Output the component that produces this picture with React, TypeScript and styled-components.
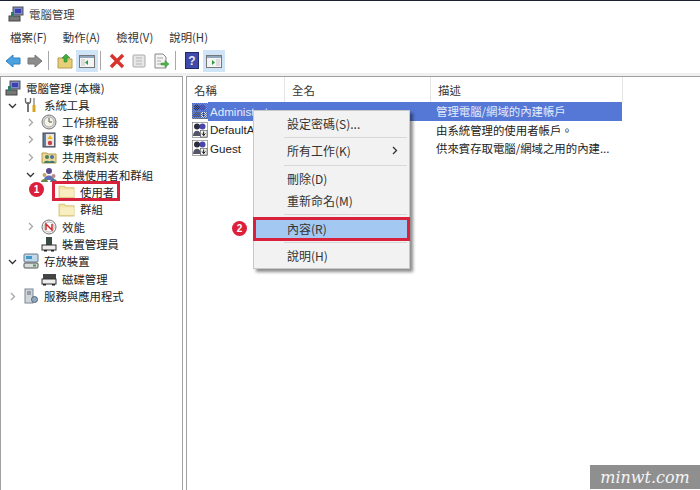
import styled, { createGlobalStyle } from 'styled-components';
import type { ReactNode } from 'react';

const Global = createGlobalStyle`
  html, body {
    margin: 0;
    padding: 0;
    background: #fff;
  }
`;

const Win = styled.div`
  position: relative;
  width: 700px;
  height: 490px;
  overflow: hidden;
  display: flex;
  flex-direction: column;
  background: #fff;
  font-family: 'Noto Sans CJK TC', 'Liberation Sans', sans-serif;
  font-size: 11.4px;
  color: #222;
`;

const TitleBar = styled.div`
  display: flex;
  align-items: center;
  gap: 5px;
  height: 26px;
  box-sizing: border-box;
  padding: 0 8px;
  border-top: 1px solid #1c2030;
  color: #444;
`;

const MenuBar = styled.div`
  display: flex;
  height: 22px;
  align-items: center;
  padding-left: 10px;
  gap: 16px;
  color: #333;
`;

const Toolbar = styled.div`
  display: flex;
  align-items: center;
  height: 25px;
  padding-left: 2px;
`;

const ToolButton = styled.div<{ $active?: boolean }>`
  width: 22px;
  height: 22px;
  display: flex;
  align-items: center;
  justify-content: center;
  background: ${({ $active }) => ($active ? '#cfe4f7' : 'transparent')};
`;

const ToolSep = styled.div<{ $before?: number }>`
  width: 1px;
  height: 19px;
  margin: 0 5px 0 ${({ $before }) => $before ?? 2}px;
  background: #a8a8a8;
`;

const Panes = styled.div`
  flex: 1;
  display: flex;
  gap: 3px;
  min-height: 0;
  padding-top: 3px;
  background: linear-gradient(#f0f0f0 3px, #fff 3px);
`;

const LeftPane = styled.div`
  width: 183px;
  box-sizing: border-box;
  border: 1px solid #a0a0a0;
  border-bottom: none;
  padding-top: 2px;
`;

const RightPane = styled.div`
  flex: 1;
  border: 1px solid #a0a0a0;
  border-right: none;
  border-bottom: none;
`;

const TreeRow = styled.div<{ $indent: number }>`
  display: flex;
  align-items: center;
  height: 17.38px;
  padding-left: ${({ $indent }) => $indent}px;
  white-space: nowrap;
`;

const Caret = styled.span`
  width: 14px;
  height: 13px;
  margin-right: 4px;
  display: flex;
  align-items: center;
  justify-content: center;
  flex: none;
`;

const TreeLabel = styled.span`
  margin-left: 5px;
`;

const HeaderRow = styled.div`
  display: flex;
  height: 25px;
  align-items: center;
`;

const HeaderCell = styled.div<{ $w: number }>`
  width: ${({ $w }) => $w}px;
  box-sizing: border-box;
  height: 100%;
  display: flex;
  align-items: center;
  padding-left: 7px;
  border-right: 1px solid #e5e5e5;
  color: #333;
`;

const ListRow = styled.div`
  display: flex;
  align-items: center;
  height: 18.5px;
  width: 435px;
  padding-left: 5px;
  box-sizing: border-box;
`;

const RowBody = styled.div<{ $selected?: boolean }>`
  flex: 1;
  display: flex;
  align-items: center;
  height: 100%;
  background: ${({ $selected }) => ($selected ? '#5578d6' : 'transparent')};
  color: ${({ $selected }) => ($selected ? '#e4ebfb' : '#222')};
`;

const NameCell = styled.div`
  width: 226px;
  box-sizing: border-box;
  padding-left: 2px;
  font-family: 'Liberation Sans', sans-serif;
  font-size: 11.6px;
`;

const DescCell = styled.div`
  padding-left: 2px;
  white-space: nowrap;
`;

const Menu = styled.div`
  position: absolute;
  left: 253px;
  top: 110px;
  width: 157px;
  height: 159px;
  box-sizing: border-box;
  background: #f2f2f2;
  border: 1px solid #c8c8c8;
  box-shadow: 3px 3px 3px rgba(0, 0, 0, 0.45);
  padding-top: 1px;
  font-size: 12px;
`;

const MenuItem = styled.div<{ $hot?: boolean }>`
  height: 22px;
  display: flex;
  align-items: center;
  justify-content: space-between;
  padding: 0 10px 0 33px;
  color: #333;
  background: ${({ $hot }) => ($hot ? '#a3c9f2' : 'transparent')};
`;

const MenuSep = styled.div`
  height: 1px;
  margin: 3px 2px 1.7px 30px;
  background: #d8d8d8;
`;

const Highlight = styled.div<{ $l: number; $t: number; $w: number; $h: number }>`
  position: absolute;
  left: ${({ $l }) => $l}px;
  top: ${({ $t }) => $t}px;
  width: ${({ $w }) => $w}px;
  height: ${({ $h }) => $h}px;
  box-sizing: border-box;
  border: 3px solid #d8213b;
`;

const Badge = styled.div<{ $l: number; $t: number }>`
  position: absolute;
  left: ${({ $l }) => $l}px;
  top: ${({ $t }) => $t}px;
  width: 15px;
  height: 15px;
  border-radius: 50%;
  background: #dc1f3a;
  color: #fff;
  font: bold 10px 'Liberation Sans', sans-serif;
  display: flex;
  align-items: center;
  justify-content: center;
`;

const Watermark = styled.div`
  position: absolute;
  left: 590px;
  top: 465px;
  width: 110px;
  height: 24px;
  background: #8f8f8f;
  color: #f4f4f4;
  font: italic 16px 'DejaVu Serif', serif;
  display: flex;
  align-items: center;
  justify-content: center;
`;

const Chevron = ({ open, dark }: { open?: boolean; dark?: boolean }) => (
  <svg width="9" height="9" viewBox="0 0 9 9" fill="none" stroke={open || dark ? '#333' : '#a6a6a6'} strokeWidth="1.3">
    <path d={open ? 'M1 3l3.5 3.5L8 3' : 'M3 1l3.500 3.500L3 8'} />
  </svg>
);

const Svg = ({ children, size = 16 }: { children: ReactNode; size?: number }) => (
  <svg width={size} height={size} viewBox="0 0 16 16" style={{ flex: 'none' }}>
    {children}
  </svg>
);

const ComputerIcon = () => (
  <Svg>
    <rect x="5" y="1" width="10" height="8" fill="#7d88c8" stroke="#555" />
    <rect x="7" y="3" width="6" height="4" fill="#3c3fb0" />
    <rect x="1" y="10" width="11" height="5" fill="#777" stroke="#444" />
    <rect x="3" y="6" width="3" height="5" fill="#2f7a6b" />
  </Svg>
);

const ToolsIcon = () => (
  <Svg>
    <path d="M5 5v10" stroke="#777" strokeWidth="2" />
    <path d="M2.500 1v3a2.500 2.500 0 0 0 5 0V1" stroke="#666" strokeWidth="1.300" fill="none" />
    <path d="M11 1v7" stroke="#999" strokeWidth="1.600" />
    <path d="M11 8v7" stroke="#d9a520" strokeWidth="3" />
  </Svg>
);

const ClockIcon = () => (
  <Svg>
    <circle cx="8" cy="8" r="7" fill="#dcdcdc" stroke="#777" />
    <circle cx="8" cy="8" r="5" fill="#f6f4e6" stroke="#aaa" />
    <path d="M8 4v4h3" stroke="#555" fill="none" />
  </Svg>
);

const EventIcon = () => (
  <Svg>
    <rect x="2" y="1" width="12" height="14" fill="#5f7fa8" stroke="#445" />
    <rect x="5" y="2" width="8" height="12" fill="#efe8d8" />
    <path d="M9 3l2.500 4h-5z" fill="#e5b820" />
    <circle cx="9" cy="11" r="2.200" fill="#c8404a" />
  </Svg>
);

const SharedIcon = () => (
  <Svg>
    <path d="M1 4h5l1 1h8v9H1z" fill="#ecd998" stroke="#b79c4a" />
    <circle cx="6" cy="8" r="2" fill="#4c7f5a" />
    <circle cx="11" cy="8" r="2" fill="#4c6f9f" />
    <path d="M3 14c0-3 6-3 6 0zM8 14c0-3 6-3 6 0z" fill="#3d7c6b" />
  </Svg>
);

const UsersIcon = () => (
  <Svg>
    <circle cx="8" cy="4" r="3" fill="#5a4a8a" />
    <path d="M3 13c0-6 10-6 10 0z" fill="#5d6fb8" />
    <circle cx="3.500" cy="8" r="2" fill="#c9a26a" />
    <path d="M0 15c0-4 7-4 7 0z" fill="#6a8a4a" />
    <circle cx="12.500" cy="9" r="2" fill="#b88" />
    <path d="M9 15c0-4 7-4 7 0z" fill="#4a7a8a" />
  </Svg>
);

const FolderIcon = () => (
  <Svg size={17}>
    <path d="M1 3h5l1 1.500h8V14H1z" fill="#f3e5a8" stroke="#d9c67c" />
    <path d="M2 6h13v7H2z" fill="#f8eebf" />
  </Svg>
);

const PerfIcon = () => (
  <Svg>
    <circle cx="8" cy="8" r="7" fill="#f4f4f4" stroke="#777" />
    <circle cx="8" cy="8" r="5" fill="#fff" stroke="#bbb" />
    <path d="M5 11V5l6 6V5" stroke="#cc2b2b" strokeWidth="1.500" fill="none" />
  </Svg>
);

const DeviceIcon = () => (
  <Svg>
    <rect x="5" y="1" width="6" height="8" fill="#3a4a44" />
    <rect x="1" y="9" width="14" height="5" fill="#eee" stroke="#333" />
    <rect x="3" y="14" width="3" height="1.500" fill="#222" />
    <rect x="10" y="14" width="3" height="1.500" fill="#222" />
  </Svg>
);

const StorageIcon = () => (
  <Svg>
    <rect x="1" y="1" width="14" height="8" rx="1" fill="#bfd9ea" stroke="#678" />
    <rect x="3" y="3" width="6" height="3" fill="#3f9ac9" />
    <rect x="1" y="10" width="14" height="5" rx="1" fill="#d8dcdc" stroke="#555" />
    <rect x="10" y="11.500" width="3" height="2" fill="#4a9a5a" />
  </Svg>
);

const DiskIcon = () => (
  <Svg>
    <rect x="2" y="3" width="13" height="5" fill="#444" />
    <rect x="1" y="8" width="14" height="5" fill="#eee" stroke="#333" />
    <rect x="2" y="13" width="3" height="1.500" fill="#222" />
    <rect x="11" y="13" width="3" height="1.500" fill="#222" />
  </Svg>
);

const ServicesIcon = () => (
  <Svg>
    <rect x="2" y="1" width="8" height="14" fill="#d0d5da" stroke="#789" />
    <path d="M4 4h4M4 6h4" stroke="#667" />
    <circle cx="11.500" cy="11.500" r="3" fill="#8fa8bf" stroke="#567" />
  </Svg>
);

const UserIcon = ({ selected }: { selected?: boolean }) => (
  <Svg>
    <defs>
      <pattern id="dither" width="2" height="2" patternUnits="userSpaceOnUse">
        <rect width="1" height="1" fill="#4a6ac8" />
        <rect x="1" y="1" width="1" height="1" fill="#4a6ac8" />
      </pattern>
    </defs>
    <rect x="0.500" y="0.500" width="15" height="15" fill={selected ? '#6f8ad8' : '#fff'} stroke="#555" strokeWidth="0.500" />
    <circle cx="10.500" cy="4.500" r="3" fill="#4a45a8" />
    <circle cx="5" cy="4.500" r="3" fill="#2c2c3c" />
    <path d="M1 14c0-7 8-7 8 0z" fill="#55556a" />
    <rect x="8.500" y="8.500" width="6.500" height="6.500" fill="#f4f4f4" stroke="#333" strokeWidth="0.500" />
    <path d="M11.700 9.500v4M10 11.500l1.700 2 1.700-2" stroke="#111" fill="none" />
    {selected && <rect width="16" height="16" fill="url(#dither)" />}
  </Svg>
);

const BackIcon = ({ grey }: { grey?: boolean }) => (
  <svg width="16" height="14" viewBox="0 0 16 14">
    <path
      d={grey ? 'M15 7L8 1v3H1v6h7v3z' : 'M1 7l7-6v3h7v6H8v3z'}
      fill={grey ? '#8c8c8c' : '#4aa3e0'}
      stroke={grey ? '#777' : '#2f7fc0'}
    />
  </svg>
);

const UpIcon = () => (
  <Svg>
    <path d="M1 5h5l1 1h8v9H1z" fill="#e7cf78" stroke="#b79c4a" />
    <path d="M9 1L5 5h2v4h3V5h3z" fill="#3fae3f" stroke="#277a27" strokeWidth="0.500" />
  </Svg>
);

const PaneIcon = ({ right }: { right?: boolean }) => (
  <Svg>
    <rect x="0.500" y="2.500" width="15" height="12" fill="#f4f4f4" stroke="#777" />
    <rect x="1" y="3" width="14" height="2" fill="#8fa6bc" />
    <rect x={right ? 10 : 2} y="6" width="4" height="7" fill="#dcdcdc" />
    <path d={right ? 'M6 7v5l3-2.500z' : 'M9 7v5l-3-2.500z'} fill="#2e9a3e" />
  </Svg>
);

const DeleteIcon = () => (
  <Svg>
    <path d="M2 2l12 12M14 2L2 14" stroke="#d8322c" strokeWidth="3.400" />
  </Svg>
);

const PropsIcon = () => (
  <Svg>
    <rect x="2" y="2" width="12" height="12" rx="1" fill="#e6e6e6" stroke="#aaa" />
    <path d="M5 5h6M5 8h6M5 11h6" stroke="#b5b5b5" />
  </Svg>
);

const ExportIcon = () => (
  <Svg>
    <path d="M2 1h8l3 3v11H2z" fill="#f4f4f4" stroke="#888" />
    <path d="M4 5h6M4 8h4M4 11h4" stroke="#aaa" />
    <path d="M8 10h4V7.500L16 11l-4 3.500V12H8z" fill="#4fb548" stroke="#2f8a2f" strokeWidth="0.500" />
  </Svg>
);

const HelpIcon = () => (
  <svg width="14" height="17" viewBox="0 0 14 17">
    <rect x="0.500" y="0.500" width="13" height="16" fill="#3f4aa8" stroke="#1e2a70" />
    <text x="7" y="13" textAnchor="middle" fontFamily="Liberation Sans" fontWeight="bold" fontSize="12" fill="#e8e8f8">?</text>
  </svg>
);

const tree: { indent: number; open?: boolean; icon: ReactNode; label: string; leaf?: boolean }[] = [
  { indent: 4, leaf: true, icon: <ComputerIcon />, label: '電腦管理 (本機)' },
  { indent: 4, open: true, icon: <ToolsIcon />, label: '系統工具' },
  { indent: 22, icon: <ClockIcon />, label: '工作排程器' },
  { indent: 22, icon: <EventIcon />, label: '事件檢視器' },
  { indent: 22, icon: <SharedIcon />, label: '共用資料夾' },
  { indent: 22, open: true, icon: <UsersIcon />, label: '本機使用者和群組' },
  { indent: 57, leaf: true, icon: <FolderIcon />, label: '使用者' },
  { indent: 57, leaf: true, icon: <FolderIcon />, label: '群組' },
  { indent: 22, icon: <PerfIcon />, label: '效能' },
  { indent: 40, leaf: true, icon: <DeviceIcon />, label: '裝置管理員' },
  { indent: 4, open: true, icon: <StorageIcon />, label: '存放裝置' },
  { indent: 40, leaf: true, icon: <DiskIcon />, label: '磁碟管理' },
  { indent: 4, icon: <ServicesIcon />, label: '服務與應用程式' },
];

const users = [
  { name: 'Administrator', desc: '管理電腦/網域的內建帳戶', selected: true },
  { name: 'DefaultAccount', desc: '由系統管理的使用者帳戶。' },
  { name: 'Guest', desc: '供來賓存取電腦/網域之用的內建...' },
];

export default function App() {
  return (
    <Win>
      <Global />
      <TitleBar>
        <ComputerIcon />
        <span>電腦管理</span>
      </TitleBar>
      <MenuBar>
        <span>檔案(F)</span>
        <span>動作(A)</span>
        <span>檢視(V)</span>
        <span>說明(H)</span>
      </MenuBar>
      <Toolbar>
        <ToolButton><BackIcon /></ToolButton>
        <ToolButton><BackIcon grey /></ToolButton>
        <ToolSep />
        <ToolButton><UpIcon /></ToolButton>
        <ToolButton $active><PaneIcon /></ToolButton>
        <ToolSep />
        <ToolButton><DeleteIcon /></ToolButton>
        <ToolButton><PropsIcon /></ToolButton>
        <ToolButton><ExportIcon /></ToolButton>
        <ToolSep $before={3} />
        <ToolButton><HelpIcon /></ToolButton>
        <ToolButton $active><PaneIcon right /></ToolButton>
      </Toolbar>
      <Panes>
        <LeftPane>
          {tree.map((r) => (
            <TreeRow key={r.label} $indent={r.indent}>
              {!r.leaf && <Caret><Chevron open={r.open} /></Caret>}
              {r.icon}
              <TreeLabel>{r.label}</TreeLabel>
            </TreeRow>
          ))}
        </LeftPane>
        <RightPane>
          <HeaderRow>
            <HeaderCell $w={98}>名稱</HeaderCell>
            <HeaderCell $w={146}>全名</HeaderCell>
            <HeaderCell $w={192}>描述</HeaderCell>
          </HeaderRow>
          {users.map((u) => (
            <ListRow key={u.name}>
              <UserIcon selected={u.selected} />
              <RowBody $selected={u.selected}>
                <NameCell>{u.name}</NameCell>
                <DescCell>{u.desc}</DescCell>
              </RowBody>
            </ListRow>
          ))}
        </RightPane>
      </Panes>
      <Menu>
        <MenuItem>設定密碼(S)...</MenuItem>
        <MenuSep />
        <MenuItem>
          所有工作(K)
          <Chevron dark />
        </MenuItem>
        <MenuSep />
        <MenuItem>刪除(D)</MenuItem>
        <MenuItem>重新命名(M)</MenuItem>
        <MenuSep />
        <MenuItem $hot>內容(R)</MenuItem>
        <MenuSep />
        <MenuItem>說明(H)</MenuItem>
      </Menu>
      <Highlight $l={52} $t={181} $w={68} $h={20} />
      <Highlight $l={253} $t={217} $w={157} $h={24} />
      <Badge $l={29} $t={182}>1</Badge>
      <Badge $l={232} $t={221}>2</Badge>
      <Watermark>minwt.com</Watermark>
    </Win>
  );
}
